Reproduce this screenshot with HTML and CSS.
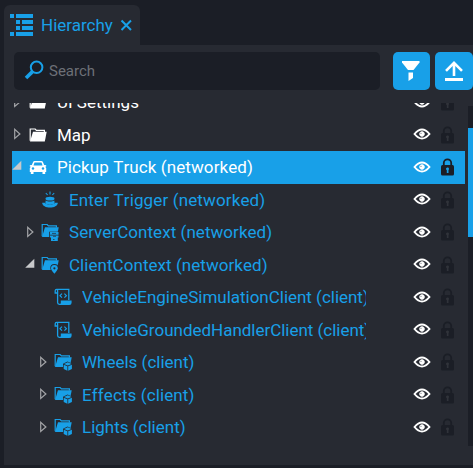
FILE: index.html
```
<!DOCTYPE html>
<html lang="en">
<head>
<meta charset="utf-8">
<title>Hierarchy</title>
<link rel="stylesheet" href="styles.css">
</head>
<body>
<svg class="defs" aria-hidden="true">
  <symbol id="closed" viewBox="0 0 10 12"><path d="M1.700 1.300v9.200L6.900 6z" fill="none" stroke="#a3a4a7" stroke-width="1.200"/></symbol>
  <symbol id="open" viewBox="0 0 10 12"><path d="M9.300 .8v9H.2z" fill="#c8c9cb"/></symbol>
  <symbol id="folder" viewBox="0 0 18 18"><path d="M1.200 14.700V3h5l1.200 1.400h8V6" fill="none" stroke="currentColor" stroke-width="1.200"/><path d="M4 5.800H17.700L15.800 15.400H1z" fill="currentColor"/></symbol>
  <symbol id="car" viewBox="0 0 18 18"><path d="M.8 7.200l2-.2 1.300-3.100q.4-.9 1.400-.9h7q1 0 1.400.9L15.200 7l2 .2v1.300l-1 .2 1 1.300v4h-1V16h-2.700v-2H4.500v2H1.800v-2h-1v-4l1-1.300-1-.2z" fill="currentColor"/><path d="M5.500 4.500h7l1 3h-9z" fill="#18a0e8"/><circle cx="4" cy="10.500" r="1.200" fill="#18a0e8"/><circle cx="14" cy="10.500" r="1.200" fill="#18a0e8"/></symbol>
  <symbol id="trigger" viewBox="0 0 18 18"><g fill="currentColor"><path d="M1.200 11.800h2.600c1 2.400 9.400 2.400 10.400 0h2.600c0 6.400-15.600 6.400-15.600 0z"/><path d="M4.700 9.500c2 1.400 6.600 1.400 8.600 0l.4 2.700c-1 1.900-8.400 1.900-9.400 0z"/><ellipse cx="9" cy="7.700" rx="4.500" ry="1.900"/></g><path d="M9 .5v3M4.800 2l1.800 2M13.200 2l-1.800 2" stroke="currentColor" stroke-width="1.100"/></symbol>
  <symbol id="server" viewBox="0 0 18 18"><use href="#folder" width="18" height="18" y="-1.500"/><path d="M8.200 8.700H18V18H8.200z" fill="#272a32"/><path d="M9 9h8.500v2.700H9zM9 12.500h8.500v2H9zM10 14h6.800V18H10z" fill="currentColor"/><path d="M11 10.400h4M12 13.300h3M12 16.500h1.500" stroke="#272a32" stroke-width=".7"/></symbol>
  <symbol id="client" viewBox="0 0 18 18"><use href="#folder" width="18" height="18" y="-1.500"/><path d="M13.400 18.500Q9 14.700 9.300 12a4.100 4.100 0 0 1 8.200 0q.3 2.700-4.100 6.500z" fill="#272a32"/><path d="M13.400 17.700Q10 14.300 10 12.300a3.400 3.400 0 0 1 6.800 0q0 2-3.400 5.400z" fill="currentColor"/><circle cx="13.400" cy="12.300" r="1.100" fill="#272a32"/></symbol>
  <symbol id="script" viewBox="0 0 18 18"><path d="M3.600 14V2.700Q3.600 1.300 2.500 1.300H14.800V12M3.600 5H1.200V2.700Q1.300 1.300 2.500 1.300M3.600 13v1.600q0 1.700 1.700 1.700H8" fill="none" stroke="currentColor" stroke-width="1.300"/><path d="M6.800 12.500h10.800v2.300q0 2.300-2.300 2.300H5q2 0 1.800-2.300z" fill="currentColor"/><path d="M8 5.700L6 7.700l2 2M10.400 5.700l2 2-2 2" fill="none" stroke="currentColor" stroke-width="1.200"/></symbol>
  <symbol id="cube" viewBox="0 0 18 18"><use href="#folder" width="18" height="18" y="-1.500"/><path d="M13.600 8.500l4.600 2.300V16l-4.600 2.500L9 16v-5.200z" fill="#272a32"/><path d="M13.800 9.200l3.800 1.700-3.800 1.700-3.800-1.700zM9.700 11.700l3.700 1.600v4.400L9.700 16zM17.900 11.700l-3.700 1.600v4.400L17.900 16z" fill="currentColor"/></symbol>
  <symbol id="eye" viewBox="0 0 18 12"><path d="M1.500 6Q9-3 16.500 6 9 15 1.500 6z" fill="none" stroke="#fff" stroke-width="1.900"/><circle cx="9" cy="6" r="2.300" fill="#fff" stroke="#fff" stroke-width="1"/><circle cx="8" cy="5.300" r=".6" fill="#777b82"/></symbol>
  <symbol id="lock" viewBox="0 0 14 18"><path d="M3.800 8V5a3.700 3.700 0 0 1 7.400 0v3" fill="none" stroke="currentColor" stroke-width="1.800"/><rect x="1" y="7" width="13" height="10.500" rx="1.500" fill="currentColor"/><path d="M6 11a1.500 1.500 0 1 1 2.500 1.100V15H6.800v-2.900a1.500 1.500 0 0 1-.8-1.100z" fill="var(--keyhole)"/></symbol>
</svg>

<div class="tab">
  <svg class="tab-icon" viewBox="0 0 24 24"><path d="M0 1h4v4H0zM6 1h17v4H6zM6 7h4v4H6zM12 7h11v4H12zM6 13h4v4H6zM12 13h11v4H12zM0 19h4v4H0zM6 19h17v4H6z" fill="currentColor"/></svg>
  <span class="tab-title">Hierarchy</span>
  <svg class="close" viewBox="0 0 12 12"><path d="M1.500 1.500l9.500 9.500M11 1.500L1.500 11" stroke="currentColor" stroke-width="2"/></svg>
</div>
<main class="panel">
  <div class="toolbar">
    <div class="search">
      <svg viewBox="0 0 20 20"><circle cx="12.600" cy="7.300" r="5.800" fill="none" stroke="currentColor" stroke-width="2"/><path d="M8.500 11.600L2 18" stroke="currentColor" stroke-width="3.600"/></svg>
      <span>Search</span>
    </div>
    <div class="button"><svg viewBox="0 0 38 38"><path d="M9 9h17.500v1.500l-6 7.500h-5.500l-6-7.500z" fill="#fff"/><path d="M15.500 20.500h4.500v5.500L15.500 29z" fill="#fff"/></svg></div>
    <div class="button"><svg viewBox="0 0 38 38"><path d="M19 24V11M11 18.800L19 10.800l8 8" fill="none" stroke="#fff" stroke-width="2.600"/><path d="M10 26h18v3H10z" fill="#fff"/></svg></div>
  </div>
  <div class="content">
    <div class="tree">
      <div class="row plain"><svg class="arrow"><use href="#closed"/></svg><svg class="icon"><use href="#folder"/></svg><span class="name">UI Settings</span><svg class="eye"><use href="#eye"/></svg><svg class="lock"><use href="#lock"/></svg></div>
      <div class="row plain"><svg class="arrow"><use href="#closed"/></svg><svg class="icon"><use href="#folder"/></svg><span class="name">Map</span><svg class="eye"><use href="#eye"/></svg><svg class="lock"><use href="#lock"/></svg></div>
      <div class="row selected"><svg class="arrow expanded"><use href="#open"/></svg><svg class="icon"><use href="#car"/></svg><span class="name wide">Pickup Truck (networked)</span><svg class="eye"><use href="#eye"/></svg><svg class="lock"><use href="#lock"/></svg></div>
      <div class="row level-1"><svg class="arrow"></svg><svg class="icon"><use href="#trigger"/></svg><span class="name wider">Enter Trigger (networked)</span><svg class="eye"><use href="#eye"/></svg><svg class="lock"><use href="#lock"/></svg></div>
      <div class="row level-1"><svg class="arrow"><use href="#closed"/></svg><svg class="icon"><use href="#server"/></svg><span class="name loose">ServerContext (networked)</span><svg class="eye"><use href="#eye"/></svg><svg class="lock"><use href="#lock"/></svg></div>
      <div class="row level-1"><svg class="arrow expanded"><use href="#open"/></svg><svg class="icon"><use href="#client"/></svg><span class="name loose">ClientContext (networked)</span><svg class="eye"><use href="#eye"/></svg><svg class="lock"><use href="#lock"/></svg></div>
      <div class="row level-2"><svg class="arrow"></svg><svg class="icon"><use href="#script"/></svg><span class="name tight">VehicleEngineSimulationClient (client)</span><svg class="eye"><use href="#eye"/></svg><svg class="lock"><use href="#lock"/></svg></div>
      <div class="row level-2"><svg class="arrow"></svg><svg class="icon"><use href="#script"/></svg><span class="name tight">VehicleGroundedHandlerClient (client)</span><svg class="eye"><use href="#eye"/></svg><svg class="lock"><use href="#lock"/></svg></div>
      <div class="row level-2"><svg class="arrow"><use href="#closed"/></svg><svg class="icon"><use href="#cube"/></svg><span class="name">Wheels (client)</span><svg class="eye"><use href="#eye"/></svg><svg class="lock"><use href="#lock"/></svg></div>
      <div class="row level-2"><svg class="arrow"><use href="#closed"/></svg><svg class="icon"><use href="#cube"/></svg><span class="name wide">Effects (client)</span><svg class="eye"><use href="#eye"/></svg><svg class="lock"><use href="#lock"/></svg></div>
      <div class="row level-2"><svg class="arrow"><use href="#closed"/></svg><svg class="icon"><use href="#cube"/></svg><span class="name">Lights (client)</span><svg class="eye"><use href="#eye"/></svg><svg class="lock"><use href="#lock"/></svg></div>
    </div>
    <div class="scrollbar"><div class="thumb"></div></div>
  </div>
</main>
</body>
</html>
```
FILE: styles.css
```
* { box-sizing: border-box; }
body {
  margin: 0;
  width: 473px;
  height: 468px;
  padding: 5px 0 3px 4px;
  overflow: hidden;
  background: #1b1e26;
  color: #18a0e8;
  font-family: Roboto, sans-serif;
  font-size: 17px;
}
.defs { position: absolute; width: 0; height: 0; }
svg { display: block; flex: none; }
.tab {
  display: flex;
  align-items: center;
  width: 136px;
  height: 40px;
  padding-left: 6px;
  border-radius: 6px 6px 0 0;
  background: #272a32;
}
.tab-icon { width: 24px; height: 24px; margin-bottom: 1px; }
.tab-title { width: 72px; margin-left: 7px; white-space: nowrap; }
.close { width: 12px; height: 12px; margin: 0 0 1px 7px; }
.panel { height: 420px; padding-top: 7px; background: #272a32; }
.toolbar { display: flex; height: 38px; padding-left: 10px; }
.search {
  display: flex;
  align-items: center;
  width: 366px;
  margin-right: 13px;
  padding-left: 10px;
  border-radius: 5px;
  background: #1b1e26;
}
.search svg { width: 20px; height: 20px; margin-bottom: 3px; }
.search span { margin-left: 5px; color: #6d7077; font-size: 15px; }
.button {
  flex: none;
  width: 37px;
  margin-right: 5px;
  border-radius: 5px;
  background: #18a0e8;
}
.button:last-child { width: 38px; margin-right: 0; }
.button svg { width: 38px; height: 38px; }
.content { display: flex; height: 343px; margin-top: 13px; padding-left: 8px; overflow: hidden; }
.tree { width: 453px; margin-top: -17px; }
.row {
  --keyhole: #30333a;
  display: flex;
  align-items: center;
  height: 32.5px;
  padding-right: 11px;
}
.plain { color: #fff; }
.selected { --keyhole: #18a0e8; color: #fff; background: #18a0e8; }
.level-1 { padding-left: 13px; }
.level-2 { padding-left: 26px; }
.arrow { width: 10px; height: 12px; margin: 0 6px 1px 1px; }
.expanded { margin: 0 7px 2px 0; }
.icon { width: 18px; height: 18px; }
.level-1 .icon, .level-2 .icon { margin-left: -1px; }
.name {
  flex: 1;
  min-width: 0;
  margin: 0 47px 0 10px;
  overflow: hidden;
  white-space: nowrap;
  font-kerning: none;
}
.wider { letter-spacing: .14px; }
.wide { letter-spacing: .1px; }
.loose { letter-spacing: .05px; }
.tight { letter-spacing: -.02px; }
.eye { width: 18px; height: 12px; margin-bottom: 1px; }
.lock { width: 14px; height: 18px; margin-left: 9px; color: #1b1e26; }
.scrollbar { width: 8px; height: 340px; margin: 3px 0 0 3px; padding-top: 22px; background: #1b1e26; }
.thumb { height: 109px; background: #18a0e8; }
```
